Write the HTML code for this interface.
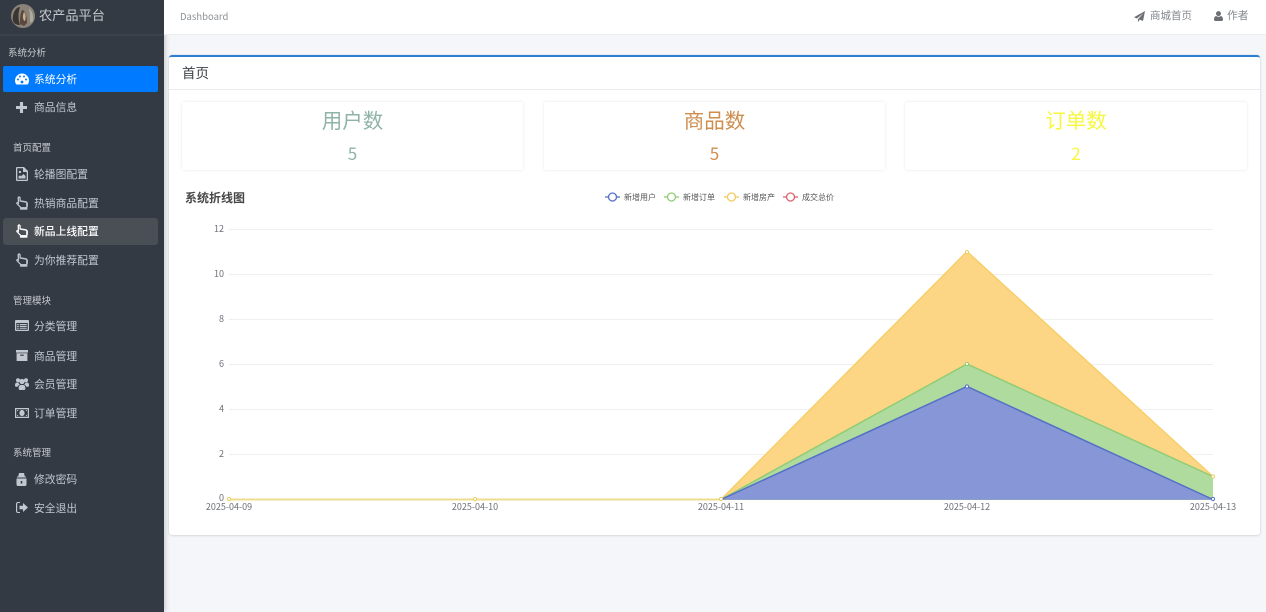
<!DOCTYPE html>
<html lang="zh"><head><meta charset="utf-8"><title>农产品平台</title>
<style>
*{box-sizing:border-box}
html,body{margin:0;padding:0;width:1266px;height:612px;overflow:hidden;background:#f4f6f9;font-family:"Liberation Sans","Noto Sans CJK SC",sans-serif}
.a{position:absolute;white-space:nowrap}
#side{position:absolute;left:0;top:0;width:164px;height:612px;background:#343a44;box-shadow:1px 0 5px rgba(0,0,0,.2)}
.h{color:#c8ccd0;font-size:9.500px;line-height:14px}
.m{position:absolute;left:34px;color:#c2c7d0;font-size:10.800px;line-height:16px;white-space:nowrap}
svg.i{position:absolute;fill:#c2c7d0}
svg.hand{stroke:#c2c7d0;stroke-width:.4}
.box{position:absolute;top:102px;height:68px;background:#fff;box-shadow:0 0 3px rgba(0,0,0,.09);text-align:center;font-family:"Noto Sans CJK SC",sans-serif}
.box b{display:block;font-weight:400;font-size:20.500px;line-height:30px;margin-top:2px}
.box span{display:block;font-size:17px;line-height:24px;margin-top:7px}
</style></head><body>
<div id="side">
<svg class="a" style="left:11px;top:4px" width="24" height="24" viewBox="0 0 24 24"><circle cx="12" cy="12" r="12" fill="#8a837a"/><path d="M2 17C1 9 5 3 9 3c-2 6-2 12 0 18-3 0-6-1-7-4z" fill="#3a3531"/><path d="M11 6c3 0 5 6 5 13l-3 3-4-2c0-5 0-10 2-14z" fill="#5a483c"/><path d="M13 8c2 2 2 6 1 9-2 0-3-5-1-9z" fill="#c9b097"/><path d="M18 4c3 3 5 8 4 13l-3 2c0-6 0-10-1-15z" fill="#b0aaa1"/></svg>
<div class="a" style="left:39px;top:6px;font-size:13.200px;line-height:20px;color:#c4c8cc">农产品平台</div>
<div class="a" style="left:0;top:34px;width:164px;height:2px;background:#3c424c"></div>
<div class="a h" style="left:8px;top:47px">系统分析</div>
<div class="a" style="left:3px;top:66px;width:155px;height:26px;background:#007bff;border-radius:2px"></div>
<svg class="i" style="left:15px;top:73px;fill:#fff" width="14" height="12" viewBox="0 0 14 12"><path d="M7 0.500C3.200 0.500 0 3.700 0 7.500c0 1.500.5 2.900 1.300 4h11.400c.8-1.100 1.300-2.500 1.300-4 0-3.800-3.200-7-7-7z"/><g fill="#007bff"><circle cx="3" cy="6.500" r="1"/><circle cx="5" cy="3.500" r="1"/><circle cx="9" cy="3.500" r="1"/><circle cx="11" cy="6.500" r="1"/><circle cx="7" cy="9" r="1.400"/></g></svg>
<div class="m" style="top:72px;color:#fff">系统分析</div>
<svg class="i" style="left:16px;top:102px" width="11" height="11" viewBox="0 0 12 12"><path d="M4.300 0h3.400v4.300H12v3.400H7.700V12H4.300V7.700H0V4.300h4.300z"/></svg>
<div class="m" style="top:100px">商品信息</div>

<div class="a h" style="left:13px;top:142px">首页配置</div>
<svg class="i" style="left:16px;top:167px" width="12" height="14" viewBox="0 0 12 14"><path d="M1 0h7l4 4v9a1 1 0 0 1-1 1H1a1 1 0 0 1-1-1V1a1 1 0 0 1 1-1zm.3 1.300v11.400h9.400V5H7V1.300z"/><circle cx="4" cy="5" r="1.200"/><path d="M2.500 11.500V9.500l1.500-1.200 1 1 2.500-2.300 2 2v2.500z"/></svg>
<div class="m" style="top:167px">轮播图配置</div>
<svg class="i hand" style="left:16px;top:196px" width="12" height="14" viewBox="0 0 12 14"><path fill-rule="evenodd" d="M3 .5c1 0 1.500.7 1.500 1.500v2.500l5 .8c1.300.2 2.200 1 2.200 2.200v2.500c0 .5-.2 1-.5 1.500v2H4.200v-1.800L.7 8C-.3 7 1 5.600 2 6.300l-.2-4.300C1.700 1.200 2.200.5 3 .5zm0 1.200c-.2 0-.3.200-.3.400l.1 6.400L1.700 7.400c-.3-.2-.5.100-.3.300l3.800 3.600h5.200V7.500c0-.6-.4-1-1.100-1.100l-5.700-1V2.100c0-.2-.2-.4-.6-.4z"/></svg>
<div class="m" style="top:196px">热销商品配置</div>
<div class="a" style="left:3px;top:218px;width:155px;height:27px;background:#4a4f55;border-radius:3px"></div>
<svg class="i hand" style="left:16px;top:224px;fill:#fff;stroke:#fff" width="12" height="14" viewBox="0 0 12 14"><path fill-rule="evenodd" d="M3 .5c1 0 1.500.7 1.500 1.500v2.500l5 .8c1.300.2 2.200 1 2.200 2.200v2.500c0 .5-.2 1-.5 1.500v2H4.200v-1.800L.7 8C-.3 7 1 5.600 2 6.300l-.2-4.300C1.700 1.200 2.200.5 3 .5zm0 1.200c-.2 0-.3.200-.3.400l.1 6.400L1.700 7.400c-.3-.2-.5.100-.3.300l3.800 3.600h5.200V7.500c0-.6-.4-1-1.100-1.100l-5.700-1V2.100c0-.2-.2-.4-.6-.4z"/></svg>
<div class="m" style="top:224px;color:#fff;font-weight:500">新品上线配置</div>
<svg class="i hand" style="left:16px;top:253px" width="12" height="14" viewBox="0 0 12 14"><path fill-rule="evenodd" d="M3 .5c1 0 1.500.7 1.500 1.500v2.500l5 .8c1.300.2 2.200 1 2.200 2.200v2.500c0 .5-.2 1-.5 1.500v2H4.200v-1.800L.7 8C-.3 7 1 5.600 2 6.300l-.2-4.300C1.700 1.200 2.200.5 3 .5zm0 1.200c-.2 0-.3.200-.3.400l.1 6.400L1.700 7.400c-.3-.2-.5.100-.3.300l3.800 3.600h5.200V7.500c0-.6-.4-1-1.100-1.100l-5.700-1V2.100c0-.2-.2-.4-.6-.4z"/></svg>
<div class="m" style="top:253px">为你推荐配置</div>

<div class="a h" style="left:13px;top:295px">管理模块</div>
<svg class="i" style="left:15px;top:320px" width="14" height="11" viewBox="0 0 14 11"><path fill-rule="evenodd" d="M1 0h12a1 1 0 0 1 1 1v9a1 1 0 0 1-1 1H1a1 1 0 0 1-1-1V1a1 1 0 0 1 1-1zm.3 3v6.700h11.400V3z"/><path d="M2.200 4h1.600v1.100H2.200zm2.500 0h7v1.100h-7zM2.200 5.900h1.600V7H2.200zm2.500 0h7V7h-7zM2.200 7.700h1.600v1H2.200zm2.500 0h7v1h-7z"/></svg>
<div class="m" style="top:319px">分类管理</div>
<svg class="i" style="left:16px;top:350px" width="12" height="11" viewBox="0 0 12 11"><path fill-rule="evenodd" d="M0 0h12v2.600H0zm.6 3.300h10.800V11H.6zM4.200 4.600v1.100h3.600V4.600z"/></svg>
<div class="m" style="top:349px">商品管理</div>
<svg class="i" style="left:15px;top:378px" width="14" height="12" viewBox="0 0 14 12"><circle cx="3" cy="2.200" r="2"/><circle cx="11" cy="2.200" r="2"/><circle cx="7" cy="3.500" r="2.600"/><path d="M0 7c0-1.500.8-2.500 2-2.500h1.500c.2 1 .7 1.700 1.300 2.200C3.500 7 2.800 8 2.700 8.700H1C.4 8.700 0 8.200 0 7.600zM14 7c0-1.500-.8-2.500-2-2.500h-1.500c-.2 1-.7 1.700-1.300 2.200 1.300.3 2 1.300 2.100 2H13c.6 0 1-.5 1-1.100zM3.700 9.500c0-1.500 1-2.500 2-2.500h2.600c1 0 2 1 2 2.500v1.200c0 .7-.5 1.300-1.200 1.300H4.900c-.7 0-1.200-.6-1.200-1.300z"/></svg>
<div class="m" style="top:377px">会员管理</div>
<svg class="i" style="left:15px;top:408px" width="14" height="10" viewBox="0 0 14 10"><path fill-rule="evenodd" d="M0 0h14v10H0zm1.200 1.200v7.600h11.600V1.200zM7 2c1.600 0 2.600 1.300 2.600 3S8.600 8 7 8 4.400 6.700 4.400 5 5.400 2 7 2zM2 3.500 3.500 2H2zm0 3V8h1.500zM12 3.500V2h-1.500zm0 3L10.500 8H12z"/></svg>
<div class="m" style="top:406px">订单管理</div>

<div class="a h" style="left:13px;top:447px">系统管理</div>
<svg class="i" style="left:16px;top:473px" width="11" height="13" viewBox="0 0 11 13"><path fill-rule="evenodd" d="M3 0h5l.8 3.500h1.200v1H1v-1h1.200zM.5 5.500h10v6c0 .8-.6 1.500-1.400 1.500H1.900C1.100 13 .5 12.300.5 11.500zM4.700 8v2.500h1.600V8z"/></svg>
<div class="m" style="top:472px">修改密码</div>
<svg class="i" style="left:16px;top:502px" width="12" height="11" viewBox="0 0 12 11"><path d="M4 1H2C1.500 1 1.200 1.400 1.200 2v7c0 .6.300 1 .8 1h2v1H2C.8 11 0 10.200 0 9V2C0 .8.800 0 2 0h2z"/><path d="M7 1l5 4.500L7 10V7.300H3.500V3.700H7z"/></svg>
<div class="m" style="top:501px">安全退出</div>
</div>

<div class="a" style="left:164px;top:0;width:1102px;height:35px;background:#fff;border-bottom:1px solid #eceef2"></div>
<div class="a" style="left:180px;top:9px;font-family:'Noto Sans CJK SC',sans-serif;font-size:9.500px;line-height:15px;color:#8d9195">Dashboard</div>
<svg class="a" style="left:1134px;top:11px;fill:#6c7075" width="11" height="11" viewBox="0 0 11 11"><path d="M11 0 9 10 5.800 8.600 4 11V8.300L9.500 2 3 7.500 0 6.200z"/></svg>
<div class="a" style="left:1150px;top:8px;font-size:10.500px;line-height:16px;color:#85898e">商城首页</div>
<svg class="a" style="left:1214px;top:11px;fill:#6c7075" width="9" height="10" viewBox="0 0 9 10"><circle cx="4.500" cy="2.600" r="2.500"/><path d="M0 8.500C0 6.500 1 5 2.300 5c.6.500 1.300.8 2.200.8S6.100 5.500 6.700 5C8 5 9 6.500 9 8.500 9 9.400 8.500 10 7.700 10H1.300C.5 10 0 9.400 0 8.500z"/></svg>
<div class="a" style="left:1227px;top:8px;font-size:10.800px;line-height:16px;color:#85898e">作者</div>

<div class="a" style="left:169px;top:55px;width:1091px;height:480px;background:#fff;border-top:2px solid #2a7fd0;border-radius:3px;box-shadow:0 0 2px rgba(0,0,0,.12),0 1px 2px rgba(0,0,0,.08)"></div>
<div class="a" style="left:169px;top:89px;width:1091px;height:1px;background:#eaebed"></div>
<div class="a" style="left:182px;top:64px;font-size:13.500px;line-height:19px;color:#3a3f44">首页</div>

<div class="box" style="left:182px;width:341px;color:#8fb3a6"><b>用户数</b><span>5</span></div>
<div class="box" style="left:544px;width:341px;color:#cf8d4e"><b>商品数</b><span>5</span></div>
<div class="box" style="left:905px;width:342px;color:#f7f73e"><b>订单数</b><span>2</span></div>

<div class="a" style="left:185px;top:190px;font-size:12px;line-height:17px;font-weight:700;color:#464646">系统折线图</div>

<svg class="a" style="left:0;top:0" width="1266" height="612" viewBox="0 0 1266 612" font-family="Noto Sans CJK SC,sans-serif">
<g stroke="#efefef" stroke-width="1">
<path d="M229 229.500H1213M229 274.500H1213M229 319.500H1213M229 364.500H1213M229 409.500H1213M229 454.500H1213"/>
</g>
<path d="M721 499.500L967 251.500 1213 476.500V499.500z" fill="#fdd685"/>
<path d="M721 499.500L967 364 1213 476.500V499.500z" fill="#afdb9f"/>
<path d="M721 499.500L967 386.500 1213 499.500z" fill="#8796d6"/>
<path d="M229 499.500H1213" stroke="#8ea0c8" stroke-width="1"/>
<path d="M229 499.500H721" stroke="#ecdc8e" stroke-width="2"/>
<path d="M721 499.500L967 251.500 1213 476.500" fill="none" stroke="#f6cf6a" stroke-width="1.500"/>
<path d="M721 499.500L967 364 1213 476.500" fill="none" stroke="#91cc75" stroke-width="1.500"/>
<path d="M721 499.500L967 386.500 1213 499.500" fill="none" stroke="#5470c6" stroke-width="1.500"/>
<g fill="#fff" stroke-width="1">
<g stroke="#e5cf5e"><circle cx="229" cy="499" r="1.600"/><circle cx="475" cy="499" r="1.600"/><circle cx="721" cy="499" r="1.600"/><circle cx="967" cy="252" r="1.600"/><circle cx="1213" cy="476.500" r="1.600"/></g>
<circle cx="967" cy="364" r="1.600" stroke="#91cc75"/>
<circle cx="967" cy="386.500" r="1.600" stroke="#5470c6"/>
<circle cx="1213" cy="499" r="1.600" stroke="#5470c6"/>
</g>
<g font-size="9" fill="#6e7079" text-anchor="end">
<text x="224" y="232">12</text><text x="224" y="277">10</text><text x="224" y="322">8</text><text x="224" y="367">6</text><text x="224" y="412">4</text><text x="224" y="457">2</text><text x="224" y="501">0</text>
</g>
<g font-size="9" fill="#6e7079" text-anchor="middle">
<text x="229" y="510">2025-04-09</text><text x="475" y="510">2025-04-10</text><text x="721" y="510">2025-04-11</text><text x="967" y="510">2025-04-12</text><text x="1213" y="510">2025-04-13</text>
</g>
<g fill="#fff" stroke-width="1.300">
<path d="M605 197H620" stroke="#5470c6"/><circle cx="612.500" cy="197" r="4" stroke="#5470c6"/>
<path d="M664 197H679" stroke="#91cc75"/><circle cx="671.500" cy="197" r="4" stroke="#91cc75"/>
<path d="M724 197H739" stroke="#f2ca5e"/><circle cx="731.500" cy="197" r="4" stroke="#f2ca5e"/>
<path d="M783 197H798" stroke="#d9656a"/><circle cx="790.500" cy="197" r="4" stroke="#d9656a"/>
</g>
<g font-size="8" fill="#555">
<text x="624" y="200">新增用户</text><text x="683" y="200">新增订单</text><text x="743" y="200">新增房产</text><text x="802" y="200">成交总价</text>
</g>
</svg>
</body></html>
